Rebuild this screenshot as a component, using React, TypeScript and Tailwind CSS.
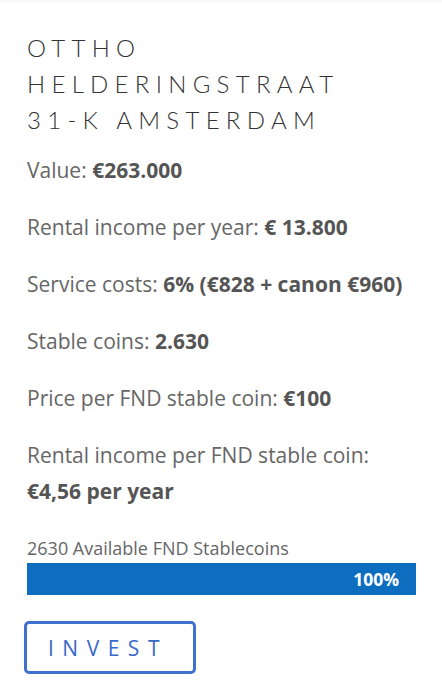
const rows: { label: string; value: string }[] = [
  { label: "Value:", value: "€263.000" },
  { label: "Rental income per year:", value: "€ 13.800" },
  { label: "Service costs:", value: "6% (€828 + canon €960)" },
  { label: "Stable coins:", value: "2.630" },
  { label: "Price per FND stable coin:", value: "€100" },
];

export default function App() {
  return (
    <div className="min-h-screen bg-white" style={{ fontFamily: "'Open Sans', sans-serif" }}>
      <div className="h-[3px] bg-[#fafafa]" />
      <div className="pl-[27px] pr-[26px] pt-[27px]">
        <h1
          className="text-[24px] leading-[36px] font-light tracking-[6.3px] text-[#333] uppercase"
          style={{ fontFamily: "Lato, sans-serif" }}
        >
          Ottho
          <br />
          Helderingstraat
          <br />
          31-K Amsterdam
        </h1>

        <div className="mt-[14px] flex flex-col gap-[21px] text-[21px] leading-[36px] text-[#666]">
          {rows.map((r) => (
            <p key={r.label}>
              {r.label} <b className="font-bold text-[#555]">{r.value}</b>
            </p>
          ))}
          <p>
            Rental income per FND stable coin:
            <br />
            <b className="font-bold text-[#555]">€4,56 per year</b>
          </p>
        </div>

        <div className="mt-[29px] text-[18px] leading-[20px] text-[#666]">2630 Available FND Stablecoins</div>
        <div className="mt-[5px] h-[32px] w-full bg-[#0d6ebf] flex items-center justify-end pr-[17px]">
          <span className="text-[17.5px] font-bold text-white">100%</span>
        </div>

        <button className="mt-[26px] -ml-[3px] w-[172px] h-[53px] border-[3px] border-[#3f72cf] rounded-[5px] text-[#3868c8] text-[21px] font-medium tracking-[8.5px] text-left pl-[21px] pt-[3px] bg-white">
          INVEST
        </button>
      </div>
    </div>
  );
}
